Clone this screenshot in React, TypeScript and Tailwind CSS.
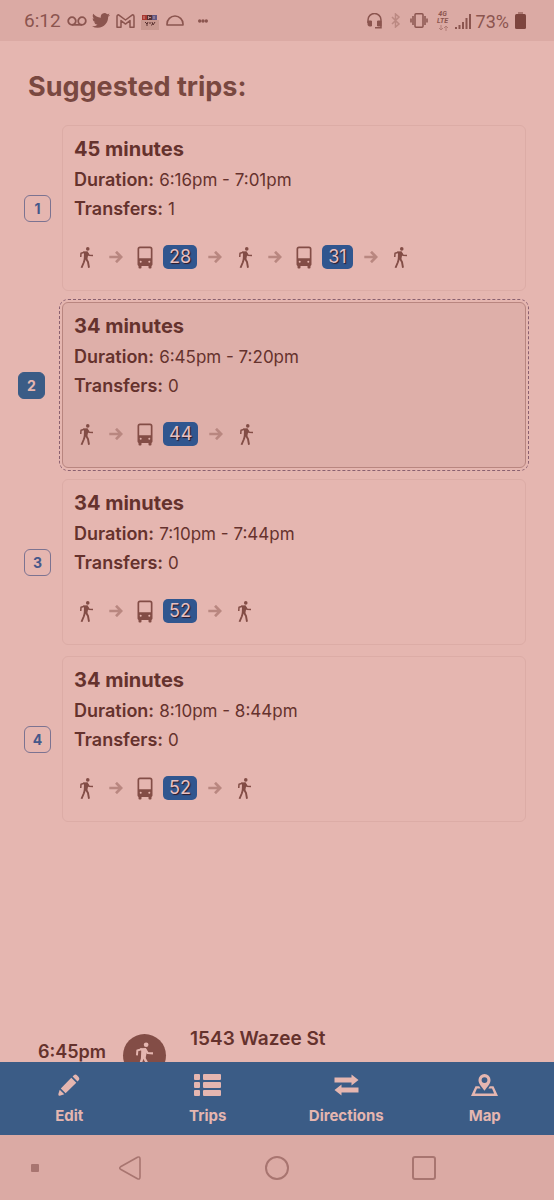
import React from "react";

type Leg = { kind: "walk" } | { kind: "bus"; route: string };
type Trip = { minutes: number; duration: string; transfers: number; legs: Leg[] };

const walk: Leg = { kind: "walk" };
const bus = (route: string): Leg => ({ kind: "bus", route });

const trips: Trip[] = [
  { minutes: 45, duration: "6:16pm - 7:01pm", transfers: 1, legs: [walk, bus("28"), walk, bus("31"), walk] },
  { minutes: 34, duration: "6:45pm - 7:20pm", transfers: 0, legs: [walk, bus("44"), walk] },
  { minutes: 34, duration: "7:10pm - 7:44pm", transfers: 0, legs: [walk, bus("52"), walk] },
  { minutes: 34, duration: "8:10pm - 8:44pm", transfers: 0, legs: [walk, bus("52"), walk] },
];

function WalkIcon({ className }: { className: string }) {
  return (
    <svg viewBox="0 0 26 42" className={className} fill="none" stroke="currentColor" strokeLinejoin="round" aria-hidden="true">
      <circle cx="15.500" cy="3.800" r="3.600" fill="currentColor" stroke="none" />
      <path d="M6 9 15 8.600 17 13 14.500 25 7.500 25 8 13Z" fill="currentColor" stroke="none" />
      <path d="M9 10.500 2 12.500 1.500 20" strokeWidth="3" />
      <path d="M14 10.500 18 16.500 26 17" strokeWidth="3.200" />
      <path d="M10 23 7.500 31 3 41.500" strokeWidth="3.800" />
      <path d="M12 23 16 30 18 41.500" strokeWidth="3.800" />
    </svg>
  );
}

function ArrowIcon() {
  return (
    <svg viewBox="0 0 14 12" className="h-3 w-[14px] shrink-0 text-[#b98780]" fill="none" stroke="currentColor" strokeWidth="2.700" aria-hidden="true">
      <path d="M.3 6H12.500M7 .8 12.200 6 7 11.200" />
    </svg>
  );
}

function BusIcon() {
  return (
    <svg viewBox="0 0 16 23" className="h-[23px] w-4 shrink-0 text-[#834d46]" fill="currentColor" aria-hidden="true">
      <path
        fillRule="evenodd"
        d="M3 .5h10A2.500 2.500 0 0 1 15.500 3v15.500a1.500 1.500 0 0 1-1 1.400v1.600a1 1 0 0 1-1 1h-1a1 1 0 0 1-1-1V20h-7v1.500a1 1 0 0 1-1 1h-1a1 1 0 0 1-1-1v-1.600a1.500 1.500 0 0 1-1-1.400V3A2.500 2.500 0 0 1 3 .5ZM3 2.200a.8.800 0 0 0-.8.800v9.300h11.600V3a.8.800 0 0 0-.8-.800ZM3.700 14.700a1 1 0 1 0 0 2 1 1 0 0 0 0-2Zm8.600 0a1 1 0 1 0 0 2 1 1 0 0 0 0-2Z"
      />
    </svg>
  );
}

function TripRow({ trip, index, selected }: { trip: Trip; index: number; selected: boolean }) {
  return (
    <li className="flex items-stretch">
      <div className={selected ? "flex w-[62px] shrink-0 items-center justify-end pr-[17px]" : "flex w-[62px] shrink-0 items-center justify-end pr-[11px]"}>
        <button
          type="button"
          aria-label={`Select trip ${index}`}
          className={
            selected
              ? "size-[27px] rounded-md border border-[#3b5c86] bg-[#3b5c86] text-[14px] font-bold text-[#e5b6b0]"
              : "size-[27px] rounded-md border border-[#7c7391] text-[14px] font-bold text-[#45588a]"
          }
        >
          {index}
        </button>
      </div>
      <article
        className={
          selected
            ? "min-w-0 flex-1 rounded-md border border-[#b98680] bg-[#deafa9] px-[11px] pt-2 pb-[21px] outline-1 outline-offset-2 outline-dashed outline-[#8a6070]"
            : "min-w-0 flex-1 rounded-md border border-[#dcaca6] px-[11px] pt-2 pb-[21px]"
        }
      >
        <h2 className="text-[20px] leading-[31px] font-bold">{trip.minutes} minutes</h2>
        <p className="flex h-[29px] items-baseline gap-[5px] text-[17px] leading-[29px]">
          <b className="text-[18px] font-semibold">Duration:</b>
          <span>{trip.duration}</span>
        </p>
        <p className="flex h-[29px] items-baseline gap-[5px] text-[17px] leading-[29px]">
          <b className="text-[18px] font-semibold">Transfers:</b>
          <span>{trip.transfers}</span>
        </p>
        <div className="mt-[22px] flex h-6 items-center gap-[11px]">
          {trip.legs.map((leg, i) => (
            <React.Fragment key={i}>
              {i > 0 && <ArrowIcon />}
              {leg.kind === "walk" ? (
                <span className="flex w-6 shrink-0 justify-center text-[#834d46]">
                  <WalkIcon className="h-[21px] w-[13px]" />
                </span>
              ) : (
                <span className="flex items-center gap-[10px] pl-[3px]">
                  <BusIcon />
                  <span className="rounded-[5px] bg-[#30568f] px-[6px] text-[18px] leading-6 text-[#e8c0c0] [text-shadow:1px_1px_1px_#301824]">
                    {leg.route}
                  </span>
                </span>
              )}
            </React.Fragment>
          ))}
        </div>
      </article>
    </li>
  );
}

function StatusBar() {
  return (
    <header className="flex h-[41px] shrink-0 items-center bg-[#dbaaa4] pr-7 pl-6 font-['Roboto',sans-serif] text-[19px] text-[#8b554f]">
      <span className="pt-[2px]">6:12</span>
      <svg viewBox="0 0 20 10" className="ml-[6px] h-[10px] w-5" fill="none" stroke="currentColor" strokeWidth="1.800" aria-hidden="true">
        <circle cx="5" cy="5" r="3.800" />
        <circle cx="15" cy="5" r="3.800" />
        <path d="M5 8.800h10" />
      </svg>
      <svg viewBox="0 2 24 20" className="ml-[5px] h-[15px] w-[18px]" fill="currentColor" aria-hidden="true">
        <path d="M23.953 4.570a10 10 0 0 1-2.825.775 4.958 4.958 0 0 0 2.163-2.723c-.951.555-2.005.959-3.127 1.184a4.920 4.920 0 0 0-8.384 4.482C7.690 8.095 4.067 6.130 1.640 3.162a4.822 4.822 0 0 0-.666 2.475c0 1.710.870 3.213 2.188 4.096a4.904 4.904 0 0 1-2.228-.616v.060a4.923 4.923 0 0 0 3.946 4.827 4.996 4.996 0 0 1-2.212.085 4.936 4.936 0 0 0 4.604 3.417 9.867 9.867 0 0 1-6.102 2.105c-.390 0-.779-.023-1.170-.067a13.995 13.995 0 0 0 7.557 2.209c9.053 0 13.998-7.496 13.998-13.985 0-.210 0-.420-.015-.630A9.935 9.935 0 0 0 24 4.590z" />
      </svg>
      <svg viewBox="0 0 19 14" className="ml-[6px] h-[14px] w-[19px]" fill="none" stroke="currentColor" strokeWidth="1.500" strokeLinejoin="round" aria-hidden="true">
        <path d="M1 2.500Q1 .8 2.600.8L9.500 6 16.400.8Q18 .8 18 2.500v10.700h-4V6.500l-4.500 3.600L5 6.500v6.700H1Z" />
      </svg>
      <svg viewBox="0 0 18 15" className="mt-1 ml-[6px] h-[15px] w-[18px]" aria-hidden="true">
        <path fill="#c99990" d="M0 5h18v10H0Z" />
        <path fill="#a93830" d="M1 0h5v5H1Z" />
        <path fill="#573034" d="M6 0h5v5H6Z" />
        <path fill="#615782" d="M11 0h5v5h-5Z" />
        <path stroke="#e3b9b3" strokeWidth=".7" d="M3 1v3M7.500 1v3M8 2.500h2M13 1v3" />
        <path stroke="#59302e" fill="none" d="m4 7 2 2 1-2M6 8v3M8 8h2M10 10h1M11 7l1 3 2-3" />
      </svg>
      <svg viewBox="0 0 18 11" className="ml-[7px] h-[11px] w-[18px]" fill="none" stroke="currentColor" strokeWidth="1.600" aria-hidden="true">
        <path d="M1 10V9a8 8 0 0 1 16 0v1Z" strokeLinejoin="round" />
      </svg>
      <svg viewBox="0 0 10 4" className="ml-[14px] h-1 w-[10px]" fill="currentColor" aria-hidden="true">
        <circle cx="1.700" cy="2" r="1.700" />
        <circle cx="5" cy="2" r="1.700" />
        <circle cx="8.300" cy="2" r="1.700" />
      </svg>
      <span className="flex-1" />
      <svg viewBox="0 0 15 16" className="h-4 w-[15px]" fill="none" stroke="currentColor" strokeWidth="1.500" aria-hidden="true">
        <path d="M1 10V7a6.300 6.300 0 0 1 13 0v7.700H8" />
        <path d="M1 8h3.500v5H2.500Q1 13 1 11.500ZM10.500 8H14v5h-3.500Z" fill="currentColor" strokeWidth="1" />
      </svg>
      <svg viewBox="0 0 10 15" className="ml-[9px] h-[15px] w-[10px] text-[#bb8982]" fill="none" stroke="currentColor" strokeWidth="1.500" aria-hidden="true">
        <path d="m1 4 7 7-3.500 3V1L8 4 1 11" />
      </svg>
      <svg viewBox="0 0 18 15" className="ml-[9px] h-[15px] w-[18px]" fill="none" stroke="currentColor" strokeWidth="1.500" aria-hidden="true">
        <rect x="5" y=".8" width="8" height="13.400" rx="1" />
        <path d="M3 3v9M15 3v9M1 5.500v4M17 5.500v4" />
      </svg>
      <span className="ml-[9px] flex w-3 flex-col items-center text-[7px] leading-[7px] font-bold italic">
        <span>4G</span>
        <span>LTE</span>
        <svg viewBox="0 0 10 6" className="h-[6px] w-[10px] text-[#b27d76]" fill="none" stroke="currentColor" aria-hidden="true">
          <path d="M3 0v5M1 3l2 2 2-2M8 6V1M6 3l2-2 2 2" />
        </svg>
      </span>
      <svg viewBox="0 0 17 16" className="ml-[6px] h-4 w-[17px]" fill="currentColor" aria-hidden="true">
        <path d="M0 14h2v2H0ZM3.500 12h2v4h-2ZM7 9h2v7H7ZM10.500 5h2v11h-2ZM14 1h2v15h-2Z" />
      </svg>
      <span className="ml-1 pt-[2px] text-[18px]">73%</span>
      <svg viewBox="0 0 11 17" className="ml-[6px] h-[17px] w-[11px] text-[#7d453e]" fill="currentColor" aria-hidden="true">
        <path d="M3 0h5v2H3Z" opacity=".5" />
        <rect y="2" width="11" height="15" rx="1.500" />
      </svg>
    </header>
  );
}

const tabs = [
  {
    label: "Edit",
    icon: (
      <svg viewBox="0 0 22 22" className="h-[22px] w-[22px]" fill="currentColor" aria-hidden="true">
        <path d="M13.300 3.700 18.300 8.700 7.600 19.200 2.800 14.400ZM14.600 2.400 15.900 1.200Q17.500-.2 19.200 1.500L20.600 2.900Q22 4.600 20.700 6.200L19.500 7.400ZM1.700 15.700 6.300 20.300 2.500 21.500Q-.2 22.300.5 19.500Z" />
      </svg>
    ),
  },
  {
    label: "Trips",
    icon: (
      <svg viewBox="0 0 27 22" className="h-[22px] w-[27px]" fill="currentColor" aria-hidden="true">
        <rect width="6" height="6" rx="1" />
        <rect y="8" width="6" height="6" rx="1" />
        <rect y="16" width="6" height="6" rx="1" />
        <rect x="9" width="18" height="6" rx="1" />
        <rect x="9" y="8" width="18" height="6" rx="1" />
        <rect x="9" y="16" width="18" height="6" rx="1" />
      </svg>
    ),
  },
  {
    label: "Directions",
    icon: (
      <svg viewBox="0 0 25 22" className="h-[22px] w-[25px]" fill="currentColor" aria-hidden="true">
        <path d="M.5 3.500H17.500V.5L24.500 6 17.500 11.500V8.500H.5ZM24.500 18.500H7.500V21.500L.5 16 7.500 10.500V13.500H24.500Z" />
      </svg>
    ),
  },
  {
    label: "Map",
    icon: (
      <svg viewBox="0 0 27 22" className="h-[22px] w-[27px]" fill="currentColor" aria-hidden="true">
        <path fillRule="evenodd" d="M13.500 0A6 6 0 0 1 19.500 6C19.500 9.800 16.500 12.500 13.500 16.700 10.500 12.500 7.500 9.800 7.500 6A6 6 0 0 1 13.500 0ZM13.500 3.200A2.900 2.900 0 1 0 13.500 9 2.900 2.900 0 0 0 13.500 3.200Z" />
        <path d="M4.500 12.300H8.200L9.700 14.500H6L3.900 19.500H23.100L21 14.500H17.300L18.800 12.300H22.500L27 22H0Z" />
      </svg>
    ),
  },
];

export default function App() {
  return (
    <div className="flex h-screen flex-col bg-[#e5b6b0] font-['Inter',sans-serif] text-[#65322d]">
      <StatusBar />
      <main className="min-h-0 flex-1 overflow-hidden">
        <h1 className="px-7 pt-[26px] text-[27px] leading-10 font-bold text-[#794840]">Suggested trips:</h1>
        <ol className="mt-[18px] flex flex-col gap-[11px] pr-7">
          {trips.map((trip, i) => (
            <TripRow key={i} trip={trip} index={i + 1} selected={i === 1} />
          ))}
        </ol>
        <section className="mt-[204px] flex items-start pl-[38px] font-semibold">
          <time className="mt-[14px] w-[85px] text-[18px] leading-6">6:45pm</time>
          <span className="mt-2 flex size-[43px] shrink-0 justify-center rounded-full bg-[#834d46] pt-2 text-[#e5b6b0]">
            <WalkIcon className="h-[28px] w-[17px]" />
          </span>
          <h2 className="ml-6 text-[19px] leading-[26px]">1543 Wazee St</h2>
        </section>
      </main>
      <nav className="grid h-[73px] shrink-0 grid-cols-4 bg-[#3b5c86] text-[#e5b6b0]">
        {tabs.map((tab) => (
          <button key={tab.label} type="button" className="flex flex-col items-center gap-[10px] pt-3 text-[15px] leading-5 font-bold">
            {tab.icon}
            {tab.label}
          </button>
        ))}
      </nav>
      <footer className="grid h-[65px] shrink-0 grid-cols-[57px_1fr_1fr_1fr_57px] items-center justify-items-center bg-[#dbaaa4] text-[#a87570]">
        <span className="ml-3 size-2 rounded-[1px] bg-current" />
        <button type="button" aria-label="Back">
          <svg viewBox="0 0 22 24" className="h-6 w-[22px]" fill="none" stroke="currentColor" strokeWidth="1.600" strokeLinejoin="round" aria-hidden="true">
            <path d="M1.500 10.800 18.500 1.200Q21 .3 21 3V21Q21 23.700 18.500 22.800L1.500 13.200Q0 12 1.500 10.800Z" />
          </svg>
        </button>
        <button type="button" aria-label="Home" className="size-6 rounded-full border-2 border-current" />
        <button type="button" aria-label="Recent apps" className="size-6 rounded-[3px] border-2 border-current" />
      </footer>
    </div>
  );
}
